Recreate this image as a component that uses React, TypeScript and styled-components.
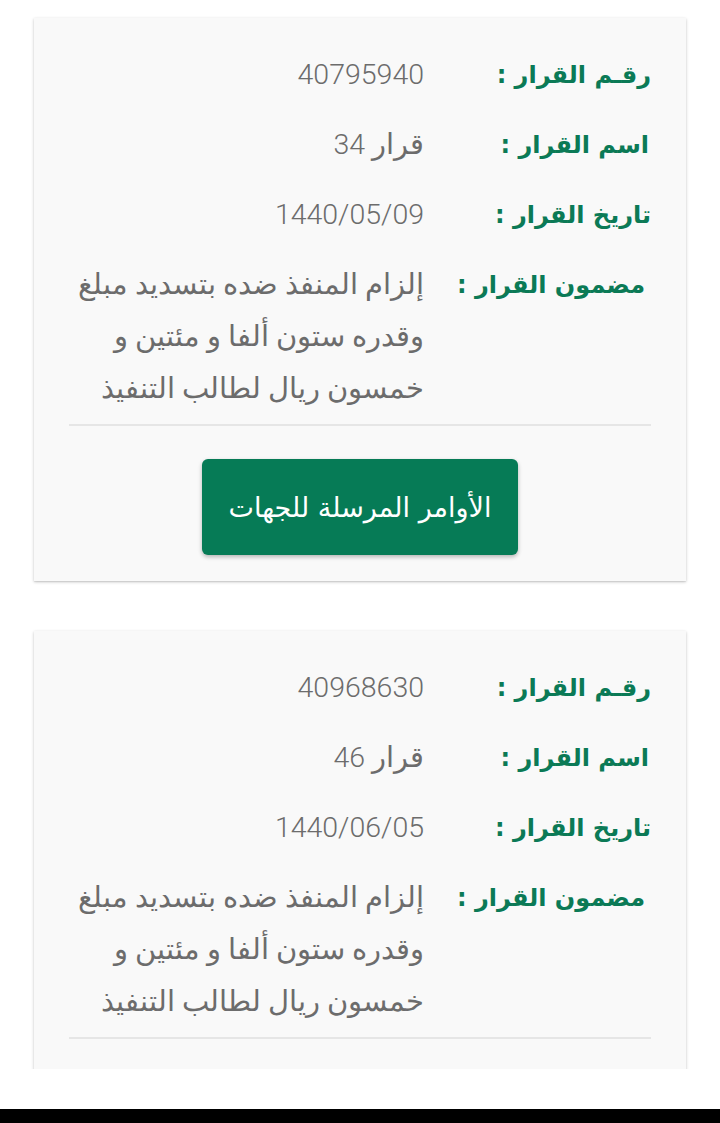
import React from "react";
import styled, { createGlobalStyle } from "styled-components";

const GlobalStyle = createGlobalStyle`
  html, body {
    margin: 0;
    padding: 0;
    background: #ffffff;
  }
  body {
    font-family: Roboto, "DejaVu Sans", sans-serif;
  }
`;

const Page = styled.div`
  width: 720px;
  height: 1123px;
  display: flex;
  flex-direction: column;
  background: #ffffff;
  overflow: hidden;
`;

const Viewport = styled.div`
  height: 1069px;
  overflow: hidden;
  flex-shrink: 0;
`;

const List = styled.div`
  display: flex;
  flex-direction: column;
  gap: 50px;
  padding: 18px 34px 0;
`;

const Card = styled.section`
  direction: rtl;
  background: #f9f9f9;
  box-shadow: 0 1px 3px rgba(0, 0, 0, 0.22), 0 1px 1px rgba(0, 0, 0, 0.06);
  padding: 31px 35px 26px 35px;
  display: flex;
  flex-direction: column;
`;

const Row = styled.div`
  display: grid;
  grid-template-columns: 211px 1fr;
  column-gap: 16px;
  margin-bottom: 18px;
  &:last-of-type {
    margin-bottom: 0;
  }
`;

const Label = styled.div<{ $inset?: number }>`
  font-family: "DejaVu Sans", sans-serif;
  font-weight: 700;
  font-size: 24px;
  line-height: 52px;
  color: #0b7a56;
  white-space: nowrap;
  padding-right: ${(p) => p.$inset ?? 0}px;
`;

const Value = styled.div`
  font-family: Roboto, "DejaVu Sans", sans-serif;
  font-weight: 300;
  font-size: 28.5px;
  line-height: 52px;
  color: #6c6c6c;
`;

const Line = styled.span`
  display: block;
  white-space: nowrap;
`;

const Divider = styled.hr`
  border: none;
  height: 2px;
  background: #e6e6e6;
  margin: 9px 0 33px;
  width: 100%;
`;

const ActionButton = styled.button`
  align-self: center;
  width: 316px;
  height: 96px;
  border: none;
  border-radius: 6px;
  background: #067b56;
  color: #ffffff;
  font-family: "DejaVu Sans", sans-serif;
  font-size: 27px;
  font-weight: 400;
  box-shadow: 0 2px 4px rgba(0, 0, 0, 0.28);
  cursor: pointer;
  direction: rtl;
`;

const Spacer = styled.div`
  flex: 1;
`;

const NavBar = styled.div`
  height: 14px;
  background: #000000;
  flex-shrink: 0;
`;

type Decision = {
  number: string;
  name: string;
  date: string;
  content: string[];
};

const decisions: Decision[] = [
  {
    number: "40795940",
    name: "قرار 34",
    date: "1440/05/09",
    content: [
      "إلزام المنفذ ضده بتسديد مبلغ",
      "وقدره ستون ألفا و مئتين  و",
      "خمسون ريال  لطالب التنفيذ",
    ],
  },
  {
    number: "40968630",
    name: "قرار 46",
    date: "1440/06/05",
    content: [
      "إلزام المنفذ ضده بتسديد مبلغ",
      "وقدره ستون ألفا و مئتين  و",
      "خمسون ريال  لطالب التنفيذ",
    ],
  },
];

const DecisionCard: React.FC<{ d: Decision }> = ({ d }) => (
  <Card>
    <Row>
      <Label>رقـم القرار :</Label>
      <Value>{d.number}</Value>
    </Row>
    <Row>
      <Label $inset={2}>اسم القرار :</Label>
      <Value>{d.name}</Value>
    </Row>
    <Row>
      <Label>تاريخ القرار :</Label>
      <Value>{d.date}</Value>
    </Row>
    <Row>
      <Label $inset={6}>مضمون القرار :</Label>
      <Value>
        {d.content.map((l, i) => (
          <Line key={i}>{l}</Line>
        ))}
      </Value>
    </Row>
    <Divider />
    <ActionButton>الأوامر المرسلة للجهات</ActionButton>
  </Card>
);

export default function App() {
  return (
    <Page>
      <GlobalStyle />
      <Viewport>
        <List>
          {decisions.map((d) => (
            <DecisionCard key={d.number} d={d} />
          ))}
        </List>
      </Viewport>
      <Spacer />
      <NavBar />
    </Page>
  );
}
